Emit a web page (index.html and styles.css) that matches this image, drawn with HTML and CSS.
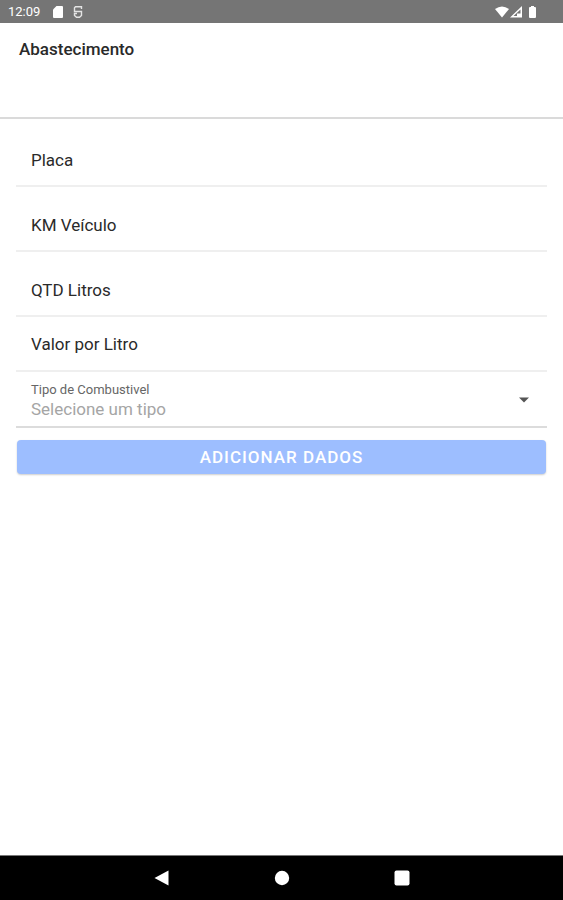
FILE: index.html
```html
<!DOCTYPE html>
<html lang="pt-BR">
<head>
  <meta charset="UTF-8">
  <meta name="viewport" content="width=device-width, initial-scale=1">
  <title>Abastecimento</title>
  <link rel="stylesheet" href="styles.css">
</head>
<body>
  <div class="status-bar">
    <span class="clock">12:09</span>
    <svg class="sd" width="12" height="14" viewBox="0 0 12 14" fill="#fff">
      <path d="M4.500 1H10a1 1 0 0 1 1 1v10a1 1 0 0 1-1 1H2a1 1 0 0 1-1-1V4.500z"/>
    </svg>
    <svg class="app" width="10" height="14" viewBox="0 0 10 14" fill="none" stroke="#e4e4e4" stroke-width="1.400">
      <path d="M8.500 4V1.700H2.500L1.500 2.700V6.500H8.500V10.500L6.500 12.300H3.500L1.500 10.500V8.500H4"/>
    </svg>
    <svg class="network" width="44" height="14" viewBox="0 0 44 14" fill="#fff">
      <path d="M0 4Q7-1 14 4L7 12.500z"/>
      <path d="M27 1V12.500H15z M25.500 4.500L18.500 11H22V8.500H25.500z" fill-rule="evenodd"/>
      <path d="M36 1h3v1h1a1 1 0 0 1 1 1v9a1 1 0 0 1-1 1h-5a1 1 0 0 1-1-1V3a1 1 0 0 1 1-1h1z"/>
    </svg>
  </div>

  <header>
    <h1>Abastecimento</h1>
  </header>

  <main>
    <form>
      <div class="item spaced">
        <label for="placa">Placa</label>
        <input type="text" id="placa">
      </div>
      <div class="item spaced">
        <label for="km">KM Veículo</label>
        <input type="text" id="km">
      </div>
      <div class="item spaced">
        <label for="litros">QTD Litros</label>
        <input type="text" id="litros">
      </div>
      <div class="item">
        <label for="valor">Valor por Litro</label>
        <input type="text" id="valor">
      </div>
      <div class="item select-item">
        <div class="select-field">
          <label for="tipo">Tipo de Combustivel</label>
          <select id="tipo">
            <option value="">Selecione um tipo</option>
            <option value="gasolina">Gasolina</option>
            <option value="etanol">Etanol</option>
            <option value="diesel">Diesel</option>
          </select>
        </div>
        <svg width="10" height="6" viewBox="0 0 10 6" fill="#555"><path d="M0 0.500h10L5 5.500z"/></svg>
      </div>
      <button type="button" class="add">ADICIONAR DADOS</button>
    </form>
  </main>

  <nav class="nav-bar">
    <button type="button" aria-label="Voltar">
      <svg width="16" height="16" viewBox="0 0 16 16" fill="#fff"><path d="M0.500 8L14.500 0.500V15.500z"/></svg>
    </button>
    <button type="button" aria-label="Início">
      <svg width="16" height="16" viewBox="0 0 16 16" fill="#fff"><circle cx="8" cy="8" r="7.200"/></svg>
    </button>
    <button type="button" aria-label="Recentes">
      <svg width="16" height="16" viewBox="0 0 16 16" fill="#fff"><rect x="0.500" y="0.500" width="15" height="15" rx="2"/></svg>
    </button>
  </nav>
</body>
</html>
```

FILE: styles.css
```css
* {
  box-sizing: border-box;
}
body {
  margin: 0;
  min-height: 100vh;
  display: flex;
  flex-direction: column;
  font-family: Roboto, "Liberation Sans", sans-serif;
  font-size: 17px;
  background: #fff;
  color: #2a2a2a;
}
svg {
  display: block;
}
.status-bar {
  display: flex;
  align-items: center;
  height: 23px;
  padding: 0 24px 0 8px;
  background: #757575;
  color: #fff;
}
.clock {
  font-size: 13px;
}
.sd {
  margin-left: 12px;
}
.app {
  margin-left: 9px;
}
.network {
  margin-left: auto;
}
header {
  height: 96px;
  padding: 16px 19px;
  border-bottom: 2px solid #dadada;
}
h1 {
  margin: 0;
  font-size: 17px;
  line-height: 20px;
  font-weight: 500;
}
main {
  flex: 1;
  padding: 3px 16px;
}
.item {
  display: flex;
  align-items: center;
  height: 55px;
  padding: 0 16px 0 15px;
  border-bottom: 2px solid #efefef;
}
.spaced {
  height: 65px;
  padding-top: 12px;
}
.item input {
  flex: 1;
  min-width: 0;
  margin-left: 16px;
  border: 0;
  outline: 0;
  background: transparent;
  font: inherit;
}
.select-item {
  height: 56px;
  padding: 2px 18px 0 15px;
  border-color: #dcdcdc;
}
.select-field {
  flex: 1;
}
.select-field label {
  display: block;
  font-size: 13px;
  line-height: 18px;
  color: #666;
}
select {
  display: block;
  width: 100%;
  height: 20px;
  padding: 0;
  border: 0;
  appearance: none;
  background: transparent;
  font: inherit;
  color: #a5a5a5;
}
.add {
  display: block;
  width: calc(100% - 2px);
  height: 34px;
  margin: 12px 1px 0;
  padding: 0;
  border: 0;
  border-radius: 4px;
  background: #9dbeff;
  box-shadow: 0 1px 2px rgba(0, 0, 0, 0.2);
  color: #fff;
  font: inherit;
  font-weight: 500;
  letter-spacing: 1px;
}
.nav-bar {
  display: flex;
  justify-content: center;
  height: 45px;
  border-top: 1px solid #777;
  background: #000;
}
.nav-bar button {
  display: flex;
  align-items: center;
  justify-content: center;
  width: 120px;
  padding: 0;
  border: 0;
  background: transparent;
}
```
